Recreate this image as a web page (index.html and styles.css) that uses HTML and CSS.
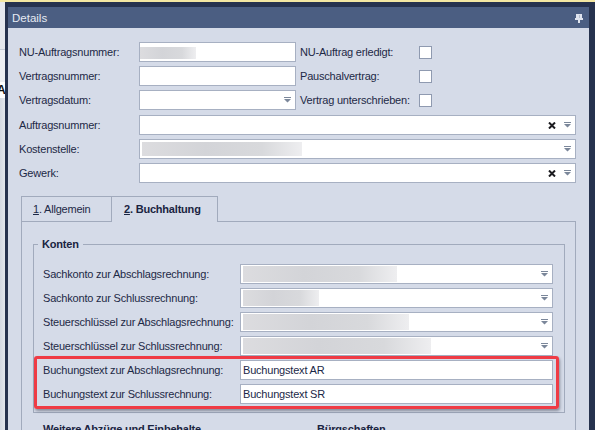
FILE: index.html
```html
<!DOCTYPE html>
<html lang="de">
<head>
<meta charset="utf-8">
<title>Details</title>
<link rel="stylesheet" href="styles.css">
</head>
<body>
<div class="screen">
  <div class="topline"></div>
  <div class="workspace">
    <div class="appbg">
      <div class="app-a1"></div>
      <div class="app-line"></div>
      <div class="app-a3"></div>
      <div class="app-row"><span>A</span></div>
      <div class="app-rest"></div>
    </div>
    <div class="dock">
      <div class="panel">
        <div class="titlebar">
          <span class="title">Details</span>
          <svg class="pin" width="8" height="9" viewBox="0 0 8 9">
            <rect x="1" y="0" width="6" height="4" fill="#dfe4ee"/>
            <rect x="4" y="1" width="1" height="3" fill="#b4bdcd"/>
            <rect x="0" y="4" width="8" height="2" fill="#dfe4ee"/>
            <rect x="3" y="6" width="2" height="3" fill="#dfe4ee"/>
          </svg>
        </div>
        <div class="body">
          <div class="form-top">
            <label class="lbl">NU-Auftragsnummer:</label>
            <div class="field"><span class="blur blur-nu"></span></div>
            <label class="lbl lbl2">NU-Auftrag erledigt:</label>
            <span class="check"></span>

            <label class="lbl">Vertragsnummer:</label>
            <div class="field"></div>
            <label class="lbl lbl2">Pauschalvertrag:</label>
            <span class="check"></span>

            <label class="lbl">Vertragsdatum:</label>
            <div class="field"><span class="grow"></span><svg class="arrow" width="7" height="6" viewBox="0 0 7 6"><path d="M0 0H7V1H0Z M0 2H7L3.5 5.5Z" fill="#7b879a"/></svg></div>
            <label class="lbl lbl2">Vertrag unterschrieben:</label>
            <span class="check"></span>
          </div>

          <div class="form-wide">
            <label class="lbl">Auftragsnummer:</label>
            <div class="field"><span class="grow"></span><svg class="clear" width="8" height="7" viewBox="0 0 8 7"><path d="M1 0.5L7 6.5M7 0.5L1 6.5" stroke="#1b1b1f" stroke-width="2"/></svg><svg class="arrow" width="7" height="6" viewBox="0 0 7 6"><path d="M0 0H7V1H0Z M0 2H7L3.5 5.5Z" fill="#7b879a"/></svg></div>

            <label class="lbl">Kostenstelle:</label>
            <div class="field"><span class="blur blur-ks"></span><span class="grow"></span><svg class="arrow" width="7" height="6" viewBox="0 0 7 6"><path d="M0 0H7V1H0Z M0 2H7L3.5 5.5Z" fill="#7b879a"/></svg></div>

            <label class="lbl">Gewerk:</label>
            <div class="field"><span class="grow"></span><svg class="clear" width="8" height="7" viewBox="0 0 8 7"><path d="M1 0.5L7 6.5M7 0.5L1 6.5" stroke="#1b1b1f" stroke-width="2"/></svg><svg class="arrow" width="7" height="6" viewBox="0 0 7 6"><path d="M0 0H7V1H0Z M0 2H7L3.5 5.5Z" fill="#7b879a"/></svg></div>
          </div>

          <div class="tabs">
            <div class="tab tab-first"><u>1</u>. Allgemein</div>
            <div class="tab tab-active"><u>2</u>. Buchhaltung</div>
          </div>
          <div class="tabpanel">
            <div class="group">
              <div class="group-title">Konten</div>
              <div class="grows">
                <label class="lbl">Sachkonto zur Abschlagsrechnung:</label>
                <div class="field"><span class="blur blur-s1"></span><span class="grow"></span><svg class="arrow" width="7" height="6" viewBox="0 0 7 6"><path d="M0 0H7V1H0Z M0 2H7L3.5 5.5Z" fill="#7b879a"/></svg></div>

                <label class="lbl">Sachkonto zur Schlussrechnung:</label>
                <div class="field"><span class="blur blur-s2"></span><span class="grow"></span><svg class="arrow" width="7" height="6" viewBox="0 0 7 6"><path d="M0 0H7V1H0Z M0 2H7L3.5 5.5Z" fill="#7b879a"/></svg></div>

                <label class="lbl">Steuerschlüssel zur Abschlagsrechnung:</label>
                <div class="field"><span class="blur blur-s3"></span><span class="grow"></span><svg class="arrow" width="7" height="6" viewBox="0 0 7 6"><path d="M0 0H7V1H0Z M0 2H7L3.5 5.5Z" fill="#7b879a"/></svg></div>

                <label class="lbl">Steuerschlüssel zur Schlussrechnung:</label>
                <div class="field"><span class="blur blur-s4"></span><span class="grow"></span><svg class="arrow" width="7" height="6" viewBox="0 0 7 6"><path d="M0 0H7V1H0Z M0 2H7L3.5 5.5Z" fill="#7b879a"/></svg></div>

                <label class="lbl">Buchungstext zur Abschlagsrechnung:</label>
                <div class="field text">Buchungstext AR</div>

                <label class="lbl">Buchungstext zur Schlussrechnung:</label>
                <div class="field text">Buchungstext SR</div>
              </div>
              <div class="highlight"></div>
            </div>
            <div class="subgroups">
              <div class="subtitle sub-left">Weitere Abzüge und Einbehalte</div>
              <div class="subtitle">Bürgschaften</div>
            </div>
          </div>
        </div>
      </div>
    </div>
  </div>
</div>
</body>
</html>
```
FILE: styles.css
```css
* { box-sizing: border-box; }
html, body { margin: 0; padding: 0; }
body {
  width: 595px;
  height: 430px;
  overflow: hidden;
  font-family: "Liberation Sans", Arial, sans-serif;
  font-size: 11px;
  letter-spacing: -0.2px;
  color: #1d2946;
  background: #26324e;
}
.screen { display: flex; flex-direction: column; height: 430px; }
.topline { height: 2px; background: #f3e7a2; flex: none; }
.workspace { flex: 1; display: flex; min-height: 0; }

.appbg { width: 5px; flex: none; display: flex; flex-direction: column; overflow: hidden; }
.app-a1 { height: 47px; background: #e5e8ee; }
.app-line { height: 1px; background: #c6ccd7; }
.app-a3 { height: 32px; background: #eceef2; }
.app-row { height: 16px; background: #fff; line-height: 16px; font-weight: bold; color: #111; font-size: 12px; }
.app-row span { display: inline-block; margin-left: -3px; }
.app-rest { flex: 1; background: linear-gradient(90deg, #d3d8e1, #e2e6ec); }

.dock { flex: 1; min-width: 0; background: #26324e; padding: 5px 6px 0 3px; display: flex; }
.panel { flex: 1; min-width: 0; display: flex; flex-direction: column; background: #d5dbe8; }

.titlebar {
  flex: none;
  height: 21px;
  background: #4b5e82;
  color: #e6eaf2;
  display: flex;
  align-items: center;
  justify-content: space-between;
  padding: 0 6px 0 4px;
}
.title { font-size: 11.5px; letter-spacing: 0; }
.pin { display: block; margin-top: 1px; }

.body { flex: 1; padding: 14px 0 0 11px; min-height: 0; }

.lbl { display: block; line-height: 20px; white-space: nowrap; color: #1d2946; }
.lbl2 { padding-left: 4px; }

.form-top {
  display: grid;
  grid-template-columns: 120px 157px 123px 14px;
  grid-auto-rows: 20px;
  row-gap: 4px;
  align-items: center;
}
.form-wide {
  margin-top: 5px;
  display: grid;
  grid-template-columns: 120px 437px;
  grid-auto-rows: 20px;
  row-gap: 4px;
}

.field {
  height: 20px;
  background: #fff;
  border: 1px solid #a7b0c2;
  display: flex;
  align-items: center;
  padding: 0 4px 0 2px;
  overflow: hidden;
}
.field.text { color: #1b2747; padding-left: 2px; }
.grow { flex: 1; }
.arrow { display: block; flex: none; }
.clear { display: block; flex: none; margin-right: 8px; }

.check {
  display: block;
  width: 13px;
  height: 13px;
  background: #fff;
  border: 1px solid #8f9ab0;
}

.blur {
  display: block;
  flex: none;
  background: linear-gradient(90deg, #dcdcdf 0%, #d3d4d8 40%, #d8d9dc 75%, #eeeef0 100%);
}
.blur-nu { width: 56px; height: 12px; margin-left: -2px; margin-top: 1px; }
.blur-ks { width: 160px; height: 14px; }
.blur-s1 { width: 154px; height: 16px; }
.blur-s2 { width: 76px; height: 16px; }
.blur-s3 { width: 166px; height: 16px; }
.blur-s4 { width: 188px; height: 16px; }

.tabs { margin: 13px 0 0 2px; display: flex; height: 25px; }
.tab {
  height: 25px;
  line-height: 24px;
  border-top: 1px solid #a1aabc;
  border-left: 1px solid #a1aabc;
  color: #1d2946;
  white-space: nowrap;
}
.tab-first { width: 90px; padding-left: 11px; }
.tab-active {
  width: 107px;
  height: 26px;
  padding-left: 12px;
  border-right: 1px solid #a1aabc;
  background: #d5dbe8;
  font-weight: bold;
  color: #1a2441;
  position: relative;
  z-index: 1;
}

.tabpanel {
  margin-left: 2px;
  width: 555px;
  height: 300px;
  border: 1px solid #a1aabc;
}

.group {
  position: relative;
  margin: 22px 0 0 11px;
  width: 532px;
  border: 1px solid #a1aabc;
  padding: 0 0 8px 9px;
}
.group-title {
  display: block;
  width: fit-content;
  height: 14px;
  margin: -8px 0 0 -5px;
  padding: 0 4px;
  line-height: 14px;
  background: #d5dbe8;
  font-weight: bold;
  color: #1a2441;
}
.grows {
  margin-top: 13px;
  display: grid;
  grid-template-columns: 197px 313px;
  grid-auto-rows: 20px;
  row-gap: 4px;
}

.highlight {
  position: absolute;
  left: 0;
  top: 111px;
  width: 525px;
  height: 53px;
  border: 3px solid #ef3b45;
  border-radius: 3px;
  box-shadow: 1px 2px 3px rgba(40, 44, 60, 0.45);
  pointer-events: none;
}

.subgroups { display: flex; margin-top: 9px; padding-left: 21px; }
.subtitle { font-weight: bold; color: #1a2441; line-height: 14px; white-space: nowrap; }
.sub-left { width: 274px; }
```
